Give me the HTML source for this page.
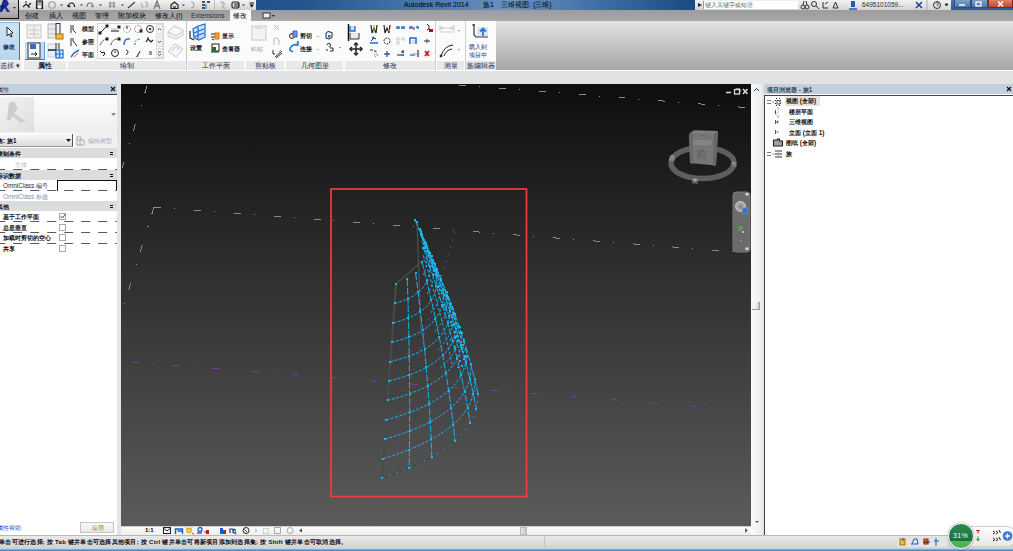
<!DOCTYPE html>
<html><head><meta charset="utf-8">
<style>
*{margin:0;padding:0;box-sizing:border-box}
html,body{width:1013px;height:551px;overflow:hidden;background:#dfe0e2;font-family:"Liberation Sans",sans-serif;font-size:7px;color:#000}
.a{position:absolute}
.t{position:absolute;white-space:nowrap;line-height:9px;font-size:6.4px}
#title{left:0;top:0;width:1013px;height:10px;background:linear-gradient(90deg,#1c4a84 0%,#24548f 30%,#5580b3 45%,#6a92c0 50%,#3c6aa1 60%,#1d4b85 68%,#1c4a84 100%)}
#qat{left:0;top:0;width:256px;height:10px;background:linear-gradient(#f4f4f4,#d2d2d2)}
#tabs{left:0;top:10px;width:1013px;height:11px;background:linear-gradient(#9c9c9c,#a8a8a8)}
#ribbon{left:0;top:21px;width:1013px;height:49px;background:#fbfbfb}
#rfill{left:496px;top:21px;width:517px;height:49px;background:linear-gradient(#e2e2e2,#a6a6a6)}
#opt{left:0;top:70px;width:1013px;height:14px;background:#e1e2e4;border-top:1px solid #fff}
#vp{left:121px;top:84px;width:630px;height:442px;background:linear-gradient(#0e0e0e,#5b5b5b)}
#props{left:0;top:84px;width:117px;height:451px;background:#fff}
#pb{left:763px;top:84px;width:250px;height:451px;background:#fff}
#status{left:0;top:535px;width:1013px;height:14px;background:linear-gradient(#ececec,#d0d0d0)}
#task{left:0;top:549px;width:1013px;height:2px;background:linear-gradient(#8ab8e0,#3a80c0)}
.lbl{position:absolute;top:61px;height:9px;background:#e9e9e9;color:#1a2a4a;text-align:center;line-height:9px;font-size:7px}
.tab{position:absolute;top:11px;line-height:9px;font-size:7px;color:#000820}
.ic{position:absolute}
</style></head><body>
<div id="title" class="a"></div>
<div id="qat" class="a"></div>
<div class="t" style="left:404px;top:0;font-size:7px;color:#000">Autodesk Revit 2014</div>
<div class="t" style="left:483px;top:0;font-size:7px;color:#000">族1</div>
<div class="t" style="left:501px;top:0;font-size:7px;color:#000">三维视图: {三维}</div>
<!-- QAT icons -->
<svg class="a" style="left:0;top:0" width="256" height="10">
<g stroke="#333" fill="none" stroke-width="1.2">
<path d="M23,7 l3,-3 l2,2 l3,-3 M25,2 h2 M29,6 v2" stroke="#222"/>
<rect x="36.5" y="1" width="6" height="7.5" fill="#9aa4b0" stroke="#222"/><rect x="38" y="5.5" width="3" height="3" fill="#fff" stroke="none"/>
<circle cx="52" cy="5" r="3.3" stroke="#aaa" stroke-width="1.5"/>
<path d="M68.5,7 q0,-4 3,-4 q3,0 3,4 M68.5,7 l-1,-2 M68.5,7 l2,-1" stroke="#222"/>
<path d="M87,7 q0,-4 3,-4 q3,0 3,4 M93,7 l-2,-1" stroke="#777"/>
<path d="M109,3 h6 M109,6 h6 M110,2 v6 M114,2 v6" stroke="#888"/>
<path d="M128,8 l7,-6" stroke="#444"/>
<path d="M141,3 l2,5 M145,2 a2.5,2.5 0 1 1 0,5" stroke="#aaa"/>
<path d="M154,9 l3,-8 l3,8 M155.5,6 h3" stroke="#777" stroke-width="1.3"/>
<path d="M171,5 l3.5,-3 l3.5,3 v3.5 h-7z" stroke="#222"/><path d="M173,7 h3" stroke="#222"/>
<path d="M191,2 a3,3 0 1 1 0,6" stroke="#aaa"/>
<path d="M202,2 h3 M202,5 h3 M202,8 h3 M207,2 h3" stroke="#222" stroke-width="1.5"/><path d="M206,4 v5" stroke="#2a90e0"/>
<path d="M214.5,0 v10" stroke="#bbb" stroke-width="1"/>
<path d="M220,2 h3 v6 h3 M224,4 h2" stroke="#aaa"/>
<rect x="232" y="2" width="7" height="6" rx="1.5" stroke="#222"/><path d="M234,4 h5 M234,6 h5" stroke="#222"/>
</g>
<g fill="#333"><path d="M60,4.5 h3 l-1.5,1.5z M80,4.5 h3 l-1.5,1.5z M99,4.5 h3 l-1.5,1.5z M121,4.5 h3 l-1.5,1.5z M182,4.5 h3 l-1.5,1.5z M242,4.5 h3 l-1.5,1.5z"/>
<path d="M249.5,2.5 h4.5 v1 h-4.5z M249.5,4.5 h4.5 l-2.25,3z" fill="#111"/></g>
</svg>
<!-- info center -->
<div class="a" style="left:695px;top:0;width:256px;height:10px;background:linear-gradient(#f2f2f2,#d4d4d4)"></div>
<div class="a" style="left:703px;top:1px;width:95px;height:8px;background:#fff;border-left:1px solid #999"></div>
<svg class="a" style="left:696px;top:0" width="8" height="10"><path d="M2,3 l4,2 l-4,2z" fill="#222"/></svg>
<div class="t" style="left:705px;top:0;font-size:6px;color:#666;line-height:10px">键入关键字或短语</div>
<svg class="a" style="left:798px;top:0" width="155" height="10">
<g stroke="#333" fill="none" stroke-width="1">
<circle cx="5" cy="7" r="2"/><circle cx="9" cy="7" r="2"/><path d="M5,5 l1,-4 M9,5 l-1,-4"/>
<circle cx="16" cy="4" r="2.5"/><path d="M18,6 l3,3"/>
<path d="M25,2 v6 h5 M27,4 l3,-2"/>
<path d="M35,8 l2.5,-6 l2.5,6z"/>
<rect x="53" y="1" width="4" height="6" fill="#2a55b8" stroke="none"/><path d="M51,9 h8" stroke="#2a55b8" stroke-width="1.5"/>
<path d="M118,2 l6,6 M124,2 l-6,6" stroke="#1b3f8a" stroke-width="1.5"/>
<path d="M129,0 v10" stroke="#aaa"/>
<circle cx="139" cy="5" r="3.5"/><path d="M138,3.5 a1.2,1.2 0 1 1 1.5,1.5 v1" stroke="#1b3f8a"/>
<path d="M147,4 l3,0 l-1.5,2z" fill="#333"/>
</g></svg>
<div class="t" style="left:862px;top:0;font-size:6.5px;color:#3a2a08;line-height:10px">6495101059...</div>
<!-- window buttons -->
<div class="a" style="left:951px;top:0;width:62px;height:10px;background:linear-gradient(#4a78ad,#2a5a93)"></div>
<div class="a" style="left:954px;top:0;width:17px;height:8px;background:linear-gradient(#7d9fc8,#4d77aa);border:1px solid #2b4f80;border-top:none"></div>
<div class="a" style="left:971px;top:0;width:17px;height:8px;background:linear-gradient(#7d9fc8,#4d77aa);border:1px solid #2b4f80;border-top:none"></div>
<div class="a" style="left:988px;top:0;width:25px;height:8px;background:linear-gradient(#e0806a,#c4452f);border:1px solid #7a2a1a;border-top:none"></div>
<svg class="a" style="left:951px;top:0" width="62" height="10"><path d="M8,5 h6" stroke="#fff" stroke-width="1.5"/><rect x="25" y="2" width="5" height="4" fill="none" stroke="#fff" stroke-width="1.2"/><path d="M47,1.5 l5,5 M52,1.5 l-5,5" stroke="#fff" stroke-width="1.5"/></svg>
<!-- tabs -->
<div id="tabs" class="a"></div>
<div class="a" style="left:0;top:0;width:18.5px;height:19px;background:linear-gradient(#d4d4d4,#9e9e9e);border-right:1.5px solid #111;border-bottom:1.5px solid #111"></div>
<svg class="a" style="left:0;top:0" width="20" height="20"><path d="M-1,12 L3,0 L7,0 L9,4 L6.5,7 L10,12 L7,12 L4.5,8 L2,12 Z" fill="#1a2a9a"/><path d="M-1,6 L5,5 L3,9z" fill="#0a1a70"/><path d="M13,7 l3,0 l-1.5,1.8z" fill="#222"/></svg>
<div class="tab" style="left:25px">创建</div>
<div class="tab" style="left:49px">插入</div>
<div class="tab" style="left:72px">视图</div>
<div class="tab" style="left:95px">管理</div>
<div class="tab" style="left:118px">附加模块</div>
<div class="tab" style="left:155px">修改人(I)</div>
<div class="tab" style="left:191px;font-weight:normal;font-size:6.5px;letter-spacing:0.2px;color:#1a2a40">Extensions</div>
<div class="a" style="left:230px;top:10px;width:21px;height:11px;background:linear-gradient(#f6f6f6,#fbfbfb)"></div>
<div class="tab" style="left:233px">修改</div>
<svg class="a" style="left:262px;top:11px" width="16" height="9"><rect x="1" y="2" width="7" height="5" fill="#eee" stroke="#333"/><path d="M10,4 l3,0 l-1.5,2z" fill="#222"/></svg>
<!-- ribbon -->
<div id="ribbon" class="a"></div>
<div id="rfill" class="a"></div>
<div class="lbl" style="left:0;width:21px;text-align:left">选择 ▾</div>
<div class="lbl" style="font-weight:bold;left:24px;width:42px">属性</div>
<div class="lbl" style="left:68px;width:118px">绘制</div>
<div class="a" style="left:186px;top:21px;width:1px;height:49px;background:#c8c8c8"></div>
<div class="lbl" style="left:188px;width:56px">工作平面</div>
<div class="lbl" style="left:246px;width:38px">剪贴板</div>
<div class="lbl" style="left:286px;width:57px">几何图形</div>
<div class="lbl" style="left:345px;width:90px">修改</div>
<div class="a" style="left:435px;top:21px;width:1px;height:49px;background:#d0d0d0"></div>
<div class="lbl" style="left:437px;width:27px">测量</div>
<div class="a" style="left:465px;top:21px;width:1px;height:49px;background:#d0d0d0"></div>
<div class="lbl" style="left:466px;width:30px;background:#dfe5ee">族编辑器</div>
<div class="a" style="left:0;top:22px;width:20px;height:38px;background:linear-gradient(#cfe3f6,#b9d5f0);border-right:1.5px solid #2a78d0;border-top:1px solid #8ab8e8"></div>
<div class="a" style="left:25px;top:42px;width:20px;height:18px;background:#c4dcf3;border-bottom:1.5px solid #2a78d0;border-right:1px solid #5a9ae0"></div>
<div class="t" style="left:3px;top:42px;color:#1a3060;font-weight:bold">修改</div>
<div class="t" style="left:82px;top:24px;color:#101828;font-weight:bold">模型</div>
<div class="t" style="left:82px;top:37px;color:#101828;font-weight:bold">参照</div>
<div class="t" style="left:82px;top:50px;color:#101828;font-weight:bold">平面</div>
<div class="t" style="left:190px;top:43px;color:#101828;font-weight:bold">设置</div>
<div class="t" style="left:222px;top:31px;color:#2a2020;font-weight:bold">显示</div>
<div class="t" style="left:222px;top:44px;color:#101828;font-weight:bold">查看器</div>
<div class="t" style="left:251px;top:44px;color:#b0a0a0">粘贴</div>
<div class="t" style="left:300px;top:31px;color:#101020;font-weight:bold">剪切</div>
<div class="t" style="left:300px;top:44px;color:#101020;font-weight:bold">连接</div>
<div class="t" style="left:469px;top:42px;color:#1a3a7a">载入到</div>
<div class="t" style="left:469px;top:50px;color:#1a3a7a">项目中</div>
<svg class="a" style="left:0;top:21px" width="496" height="40" viewBox="0 21 496 40">
<g fill="none" stroke="#222" stroke-width="1">
<!-- cursor -->
<path d="M7,27 L7,36 L9,34 L11,37 L12,36.5 L10.5,33.5 L13,33 Z" fill="#fff" stroke="#222"/>
<!-- props icons -->
<g stroke="#c8c8c8"><rect x="27" y="25" width="14" height="13" fill="#f0f0f0"/><path d="M29,30 h10 M29,34 h10 M34,26 v11"/></g>
<rect x="48" y="24" width="10" height="14" fill="#e8ecf0" stroke="#bbb"/><path d="M48,24 h8 M48,29 h8 M48,34 h8" stroke="#c0c6cc"/><rect x="56" y="23.5" width="4" height="12" stroke="#333" fill="#f4f4f4"/><rect x="56" y="34" width="7" height="5" fill="#f0c030" stroke="#a07010"/>
<rect x="28" y="43" width="12" height="15" fill="#fbfbfb" stroke="#333"/><rect x="30" y="44" width="6" height="5" fill="#3a6ab0" stroke="none"/><path d="M31,54 h6 M35,52 l2,2 l-2,2" stroke="#222"/>
<rect x="48" y="44" width="10" height="13" fill="#eceff2" stroke="#ccc"/><path d="M48,50 h8" stroke="#222" stroke-width="1.5"/><path d="M56,43 v13 M59,43 v6" stroke="#333"/><g stroke="#1a70d0" stroke-width="1.2"><rect x="56" y="50" width="7" height="8" fill="#d8e8f8"/><path d="M59.5,50 v8 M56,54 h7"/></g>
<!-- draw small -->
<path d="M71,25 v8 M73,25 v5 l3,3" stroke="#333"/>
<path d="M71,38 v8 M73,38 v3 l4,5" stroke="#333"/>
<path d="M71,57 l3,-4 l5,-3" stroke="#2a6ad0" stroke-width="1.5"/><path d="M74,57 l4,-4" stroke="#e07020"/>
<rect x="97.5" y="23.5" width="66" height="35" fill="none" stroke="#d4d4d4"/>
<rect x="156.5" y="24.5" width="6" height="10" fill="#f2f2f2" stroke="#ddd"/><rect x="156.5" y="36.5" width="6" height="10" fill="#f2f2f2" stroke="#ddd"/><rect x="156.5" y="48.5" width="6" height="9" fill="#f2f2f2" stroke="#ddd"/>
<path d="M158,30 l1.5,-1.5 l1.5,1.5 M158,41 l1.5,1.5 l1.5,-1.5 M158,52 h3 M158,54 l1.5,1.5 l1.5,-1.5" stroke="#555"/>
<path d="M100,33 l7,-7" /><rect x="106" y="25" width="2" height="2" fill="#111"/><rect x="99" y="32" width="2" height="2" fill="#111"/>
<path d="M111,31 h8" stroke="#111"/><path d="M111,29 h6" stroke="#bbb"/><rect x="118" y="26" width="2" height="2" fill="#111"/>
<circle cx="127" cy="29" r="3.5" stroke="#999" stroke-dasharray="1.5,1"/><path d="M127,26 v3"/>
<circle cx="138" cy="29" r="3.5" stroke="#777" stroke-dasharray="1.5,1"/><rect x="140" y="30" width="2" height="2" fill="#e02020"/>
<circle cx="150" cy="29" r="3.5" stroke="#333"/><circle cx="150" cy="29" r="0.8" fill="#333"/>
<path d="M100,45 q3,-6 7,-6" stroke-dasharray="1.5,1"/><rect x="106" y="38" width="2" height="2" fill="#111"/>
<path d="M111,45 q1,-6 7,-6" stroke-dasharray="1.5,1"/><rect x="118" y="38" width="2" height="2" fill="#111"/>
<path d="M124,45 q0,-7 6,-6" stroke="#1a60d0" stroke-width="1.3"/>
<path d="M135,45 v-3 q1,-3 6,-3" stroke="#1a60d0" stroke-dasharray="2,1.5"/>
<path d="M146,42 l2,-3 l3,3 l2,-2 M148,39 v-2" stroke="#222" stroke-width="1.2"/>
<path d="M100,51 l2,2 l2,-1 q2,2 -1,4" stroke="#111"/>
<circle cx="115" cy="53" r="3.5"/><path d="M115,51 v2"/>
<path d="M126,50 q4,1 0,5" />
<path d="M137,57 l3,-6" stroke="#111"/><path d="M136,57 l4,-6" stroke="#2aaa30" stroke-dasharray="1,1"/>
<rect x="149" y="51" width="3" height="4" fill="#999" stroke="none"/>
<g stroke="#c8c8c8" fill="#f6f6f6"><path d="M168,32 l6,-6 l9,4 l0,5 l-7,4 l-8,-3z"/><path d="M168,32 l8,4 l7,-5"/><path d="M168,51 l7,-7 l8,5 l-7,8z"/><path d="M171,51 l5,-4 l4,3"/></g>
<!-- workplane -->
<g stroke="#1a6ed0" stroke-width="1.2" fill="#c8dff4"><path d="M193,29 l5,-3 l7,-2 v13 l-6,3 l-5,-2z"/><path d="M198,27 v12 M194,33 l10,-4 M194,37 l10,-4"/></g><path d="M190,31 v7 l4,2" stroke="#222" stroke-width="1.2"/>
<path d="M211,34 h4 M211,37 h4 M212,39 l2,1" stroke="#222"/><rect x="215" y="33" width="4" height="6" fill="#f6a020" stroke="#e07010"/>
<rect x="212" y="44" width="7" height="7" fill="#fff" stroke="#222"/><rect x="212" y="47" width="4" height="4" fill="#1a7a20" stroke="none"/><path d="M211,52 h8" stroke="#222"/>
<!-- clipboard -->
<g stroke="#c8c8c8"><rect x="252" y="26" width="14" height="14" fill="#f4f4f4"/><path d="M255,28 h8"/></g>
<path d="M274,25 l5,5 M279,25 l-5,5" stroke="#bbb"/>
<path d="M274,45 v-7 h3 l2,2 v5" stroke="#bbb"/>
<path d="M273,50 v4 h2 M275,57 l7,-6 M276,58 l6,-5" stroke="#333"/><path d="M279,52 l2,-2" stroke="#e0a030"/>
<!-- geometry -->
<circle cx="292" cy="36" r="2.5" stroke="#222"/><path d="M293,31 v6 h4 v-6z" fill="#5aa0e0" stroke="#1a6ed0"/><path d="M292,33 l0.5,2" stroke="#e02020" stroke-width="1.5"/>
<path d="M290,48 l3,-3 h5 v-4 M290,48 v2 l3,2" stroke="#1a6ed0" stroke-width="1.5" fill="#a8ccee"/>
<path d="M326,33 l2,-1.5 l4,1 v5 l-3,1.5 l-3,-1z" stroke="#222"/><rect x="328" y="35" width="2.5" height="2.5" fill="#1a6ed0" stroke="none"/>
<path d="M327,45 a1.8,1.8 0 1 1 2,2 M326,50 h2 M330,48 h3 v3 h-3" stroke="#222"/><path d="M339,47 l2,0 l-1,1.5z" fill="#555" stroke="none"/>
<path d="M318,36 v0.5 M318,49 v0.5" stroke="#333" stroke-width="1.3"/>
<!-- modify -->
<path d="M348.5,24 v17" stroke="#111" stroke-width="1.5"/><path d="M350,26 v5 h5 v-5" stroke="#1a6ed0" stroke-width="1.3" fill="#c8dff4"/><path d="M350,33 v6 h9 v-6" stroke="#333" fill="#e8ecf0"/>
<path d="M356,43 v12 M350,49 h12" stroke="#222" stroke-width="1.5"/><path d="M354,45 l2,-2 l2,2 M354,53 l2,2 l2,-2 M352,47 l-2,2 l2,2 M360,47 l2,2 l-2,2" stroke="#222" stroke-width="1.5"/>
<path d="M371,25 l1,8 l2,-5 l2,5 l1,-8" stroke="#222" stroke-width="1.2"/><path d="M374,25 v8" stroke="#7ac040"/>
<path d="M384,25 l1,8 l2,-5 l2,5 l1,-8" stroke="#222" stroke-width="1.2"/><path d="M388,31 l2,-1" stroke="#f08020" stroke-width="1.5"/>
<path d="M397,29 v-2 h2 v2 M402,29 v-2 h2 v2" stroke="#1a6ed0" stroke-width="1.5"/>
<path d="M410,29 v-2 h2 v2 M416,27 h2 v2" stroke="#1a6ed0" stroke-width="1.5"/><path d="M414,27 v3" stroke="#d02020" stroke-width="1.2"/>
<path d="M427,24 l2,2 v3 l-2,1" stroke="#222"/><rect x="429" y="29" width="4" height="3" fill="#b01010" stroke="none"/>
<path d="M370,43 h8" stroke="#1a6ed0" stroke-width="1.5"/><path d="M371,41 l3,-3 l2,1" stroke="#222"/><path d="M372,38 l2,-1" stroke="#1a6ed0" stroke-width="1.5"/>
<circle cx="387" cy="41" r="3" stroke-dasharray="2,1"/>
<g stroke="#ccc"><rect x="397" y="38" width="2" height="2"/><rect x="402" y="38" width="2" height="2"/><rect x="397" y="42" width="2" height="2"/></g>
<path d="M410,44 v-6 h6 v6" stroke="#1a6ed0" stroke-width="1.5"/><rect x="412" y="40" width="3" height="4" fill="#ddd" stroke="none"/>
<path d="M424,41 h6 M427,39 v4" stroke="#333"/>
<path d="M370,50 l3,0 M374,51 h2 v1" stroke="#333"/><circle cx="376" cy="55" r="1.5" stroke="#1a6ed0" stroke-dasharray="1,1"/>
<path d="M384,54 h6 M387,51 v6" stroke="#222"/><rect x="386" y="53" width="3" height="2" fill="#1a6ed0" stroke="none"/>
<path d="M397,55 h4 M401,52 h3 M403,50 v3" stroke="#222"/><rect x="401" y="54" width="3" height="2" fill="#1a8ae0" stroke="none"/>
<path d="M410,55 h5 M418,50 v7" stroke="#333" stroke-width="1.2"/><path d="M412,54 h5" stroke="#5ab0f0"/>
<path d="M425,51 l4,5 M429,51 l-4,5" stroke="#d01818" stroke-width="1.8"/>
<!-- measure -->
<path d="M440,28 h14 M441,28 l2,-1.5 M441,28 l2,1.5 M453,28 l-2,-1.5 M453,28 l-2,1.5 M440,25 v6 M454,25 v6" stroke="#c8c8c8"/><rect x="440" y="31" width="14" height="2" fill="#e4e4e4" stroke="none"/>
<path d="M458,30 l2,0 l-1,1.5z M458,49 l2,0 l-1,1.5z" fill="#777" stroke="none"/>
<path d="M441,56 q3,-10 12,-11 M444,56 q2,-6 8,-7" stroke="#222"/><circle cx="441" cy="56" r="1" fill="#111"/>
<!-- family editor -->
<path d="M474,24 v11 l2,2 h12" stroke="#333" stroke-width="1.2"/><path d="M472,25 h3" stroke="#333"/><rect x="477" y="27" width="11" height="9" fill="#dde4ec" stroke="none"/><path d="M483,36 v-7 M480,31.5 l3,-3 l3,3" stroke="#1a7ae0" stroke-width="1.8"/>
</g>
</svg>
<!--RIBBONICONS-->
<div id="opt" class="a"></div>
<!-- properties palette -->
<div id="props" class="a"></div>
<div class="a" style="left:0;top:84px;width:117px;height:11px;background:#c4d0dd;border-bottom:1px solid #3a3a3a"></div>
<div class="t" style="left:-3px;top:85px;color:#4a4030">属性</div>
<svg class="a" style="left:109px;top:85px" width="8" height="9"><path d="M2,2 l4,4 M6,2 l-4,4" stroke="#111" stroke-width="1.2"/></svg>
<div class="a" style="left:0;top:96px;width:117px;height:37px;background:linear-gradient(#fdfdfd,#eeeeee)"></div>
<div class="a" style="left:0;top:97px;width:34px;height:35px;background:linear-gradient(135deg,#f4f4f4,#dedede)"></div>
<svg class="a" style="left:0;top:97px" width="34" height="35"><path d="M7,23 L9,6 L14,4 L18,12 L14,16 L25,24 L21,26 L12,19 L11,23 Z" fill="#cdcdcd"/></svg>
<svg class="a" style="left:111px;top:112px" width="6" height="6"><path d="M0,1 h5 l-2.5,3z" fill="#888"/></svg>
<div class="a" style="left:0;top:134px;width:73px;height:13px;background:linear-gradient(#fafafa,#dcdcdc);border-right:1.5px solid #555;border-bottom:1px solid #999"></div>
<div class="t" style="font-weight:bold;left:-3px;top:136px;color:#111">族: 族1</div>
<svg class="a" style="left:65px;top:137px" width="7" height="7"><path d="M1,2 h5 l-2.5,3z" fill="#111"/></svg>
<div class="a" style="left:75px;top:133px;width:42px;height:15px;background:#f0f0f0"></div>
<svg class="a" style="left:76px;top:135px" width="12" height="11"><path d="M1,2 h4 v3 h-4z M4,5 h4 v5 h-4z M1,5 v5 h3" fill="none" stroke="#aaa"/></svg>
<div class="t" style="left:88px;top:136px;color:#a0a8b8">编辑类型</div>
<div class="a" style="left:0;top:148px;width:117px;height:10px;background:#dcdcdc"></div>
<div class="t" style="font-weight:bold;left:-3px;top:149px;color:#111">限制条件</div>
<div class="t" style="left:15px;top:160px;color:#c8b8a8">主体</div>
<div class="a" style="left:0;top:170px;width:117px;height:10px;background:#dcdcdc"></div>
<div class="t" style="font-weight:bold;left:-3px;top:171px;color:#111">标识数据</div>
<div class="t" style="left:3px;top:181px;color:#1a2a4a">OmniClass 编号</div>
<div class="a" style="left:57px;top:180px;width:60px;height:11px;border:1px solid #111;border-bottom:none;background:#fff"></div>
<div class="t" style="left:3px;top:192px;color:#8090b0">OmniClass 标题</div>
<div class="a" style="left:0;top:201px;width:117px;height:10px;background:#dcdcdc"></div>
<div class="t" style="font-weight:bold;left:-3px;top:202px;color:#111">其他</div>
<div class="t" style="font-weight:bold;left:3px;top:212px;color:#111">基于工作平面</div>
<div class="t" style="font-weight:bold;left:3px;top:223px;color:#111">总是垂直</div>
<div class="t" style="font-weight:bold;left:3px;top:233px;color:#111">加载时剪切的空心</div>
<div class="t" style="font-weight:bold;left:3px;top:244px;color:#111">共享</div>
<svg class="a" style="left:0;top:140px" width="117" height="120">
<g fill="#111"><path d="M110,12 h3 v1 h-3z M110,14 h3 v1 h-3z M110,34 h3 v1 h-3z M110,36 h3 v1 h-3z M110,65 h3 v1 h-3z M110,67 h3 v1 h-3z"/></g>
<g stroke="#5a5a5a" stroke-width="1" stroke-dasharray="9,8" stroke-dashoffset="3.8"><path d="M0,29.5 h117 M0,50.5 h117 M0,81.5 h117 M0,92.5 h117 M0,103.5 h117"/></g>
<g fill="#fff" stroke="#aaa"><rect x="59.5" y="73.5" width="6" height="6"/><rect x="59.5" y="84.5" width="6" height="6"/><rect x="59.5" y="94.5" width="6" height="6"/><rect x="59.5" y="105.5" width="6" height="6"/></g>
<path d="M60.5,76 l2,2 l3,-4" stroke="#2a4a9a" fill="none"/>
</svg>
<div class="t" style="left:-3px;top:523px;color:#1a5ad0">属性帮助</div>
<div class="a" style="left:80px;top:522px;width:34px;height:11px;background:linear-gradient(#fafafa,#e8e8e8);border:1px solid #c4c4c4"></div>
<div class="t" style="left:92px;top:523px;color:#8a7a60">应用</div>
<div class="a" style="left:117px;top:84px;width:4px;height:451px;background:#e4e4e4"></div>

<div id="vp" class="a"></div>
<svg class="a" style="left:121px;top:84px" width="630" height="442" viewBox="121 84 630 442">
<g stroke="#8a8a8a" stroke-width="1" fill="none" stroke-dasharray="7,13,1,19" shape-rendering="crispEdges">
<path d="M147,86 L122,168"/>
<path d="M154,207 L124,305"/>
<path d="M154,207 L751,253"/>
<path d="M459,85 L752,108"/>
</g>
<path d="M132,362 L711,407.5" stroke="#7a3a98" stroke-width="1" fill="none" stroke-dasharray="7,13,1,19" shape-rendering="crispEdges"/>
<path d="M455,232 L367,526" stroke="#7a3a9a" stroke-width="1.2" fill="none" stroke-dasharray="1.5,6"/>
<rect x="331" y="189" width="195.5" height="307.5" fill="none" stroke="#f23c3c" stroke-width="1.7"/>
<!-- viewcube -->
<ellipse cx="702.5" cy="163" rx="31.5" ry="15.5" fill="none" stroke="#5e5e5e" stroke-width="5.5"/>
<path d="M689,134 L694,130.5 L718,131 L716,165.5 L690,163 Z" fill="#767676"/><path d="M689,134 L693,132 L693,164 L690,163z" fill="#6a6a6a"/>
<path d="M690,133 L694,130.5 L718,131 L714,134 Z" fill="#7e7e7e"/>
<path d="M714,134 L718,131 L716,165.5 L713,166 Z" fill="#666"/>
<rect x="693" y="140" width="19" height="5" fill="#848484"/>
<text x="696" y="158" font-size="11" fill="#5c5c5c" font-family="Liberation Sans">前</text>
<path d="M702,136 l1,-2 M706,136 h1" stroke="#555"/>
<text x="669" y="160" font-size="6" fill="#bbb" font-family="Liberation Sans">西</text>
<text x="731" y="166" font-size="6" fill="#bbb" font-family="Liberation Sans">东</text>
<text x="692" y="183" font-size="6" fill="#ccc" font-family="Liberation Sans">南</text>
<!-- viewport buttons -->
<path d="M726,92.5 h5" stroke="#ddd" stroke-width="1.5"/>
<rect x="734.5" y="89.5" width="5" height="4.5" fill="none" stroke="#ddd" stroke-width="1.3"/><path d="M736,89 h4 v3" stroke="#ddd" fill="none"/>
<path d="M743,89 l4.5,5 M747.5,89 l-4.5,5" stroke="#ddd" stroke-width="1.5"/>
<!-- navbar -->
<rect x="733" y="192" width="17" height="60" rx="3" fill="#6b6b6b" stroke="#7a7a7a"/>
<rect x="745.5" y="193" width="3" height="2.5" fill="#ddd"/><rect x="745.5" y="247.5" width="3" height="2.5" fill="#ddd"/>
<circle cx="740.5" cy="206.5" r="5" fill="#a8a8a8" stroke="#c8c8c8"/><circle cx="740.5" cy="206.5" r="2" fill="#888"/>
<rect x="742.5" y="208" width="5" height="6" fill="#3a70b8" stroke="#5a90d0" stroke-width="0.8"/>
<rect x="738" y="226" width="5" height="5.5" fill="#5a9a4a"/><circle cx="743" cy="232" r="1.5" fill="#ddd" stroke="#333" stroke-width="0.6"/>
<path d="M739.5,240 h3 l-1.5,1.5z" fill="#999"/>
<path d="M741.5,218.5 h0.8" stroke="#999"/>
<path d="M396.0,284.0 L395.3,293.7 L394.6,303.4 L393.9,313.1 L393.2,322.8 L392.5,332.5 L391.8,342.2 L391.1,351.9 L390.4,361.6 L389.7,371.3 L389.0,381.0 L388.3,390.7 L387.6,400.4 L386.9,410.1 L386.2,419.8 L385.5,429.5 L384.8,439.2 L384.1,448.9 L383.4,458.6 L382.7,468.3 L382.0,478.0" stroke="#4a4a4a" stroke-width="2" fill="none"/>
<path d="M382.0,478.0 L388.4,475.8 L394.6,473.6 L400.6,471.4 L406.4,469.1 L411.9,466.8 L417.2,464.4 L422.3,462.0 L427.2,459.5 L431.8,457.0 L436.2,454.4 L440.4,451.8 L444.4,449.2 L448.2,446.5 L451.7,443.8 L455.0,441.0 L458.1,438.2 L461.0,435.3 L463.6,432.4 L466.0,429.4 L468.2,426.4 L470.2,423.4 L472.0,420.3 L473.5,417.2 L474.8,414.0 L475.9,410.8 L476.8,407.5 L477.4,404.2 L477.8,400.8 L478.0,397.4 L478.0,394.0" stroke="#4a4a4a" stroke-width="2" fill="none"/>
<path d="M396,284 L428,256 M417,221 L421,335" stroke="#4a4a4a" stroke-width="1.5" fill="none"/>
<path d="M394.6,303.4 L397.0,302.7 L399.4,302.0 L401.6,301.3 L403.8,300.5 L405.9,299.7 L407.9,298.8 L409.8,297.8 L411.7,296.9 L413.4,295.8 L415.1,294.7 L416.6,293.6 L418.1,292.4 L419.5,291.2 L420.8,290.0 L422.0,288.6 L423.2,287.3 L424.2,285.9 L425.2,284.4 L426.0,282.9 L426.8,281.3 L427.5,279.7 L428.1,278.1 L428.7,276.4 L429.1,274.6 L429.5,272.9 L429.7,271.0 L429.9,269.1 L430.0,267.2 L430.0,265.2 L429.9,263.2 L429.8,261.1 L429.5,259.0 L429.2,256.8 L428.7,254.6 L428.2,252.3 L427.6,250.0 L426.9,247.7 L426.2,245.2 L425.3,242.8 L424.4,240.3" stroke="#1ab4f0" stroke-width="1" fill="none" stroke-dasharray="3,1.5"/>
<path d="M393.2,322.8 L396.0,322.1 L398.7,321.4 L401.2,320.6 L403.7,319.8 L406.1,318.9 L408.5,318.0 L410.7,317.0 L412.8,316.0 L414.9,314.9 L416.8,313.8 L418.7,312.7 L420.4,311.5 L422.1,310.3 L423.7,309.0 L425.2,307.7 L426.6,306.3 L427.9,304.9 L429.1,303.4 L430.3,301.9 L431.3,300.4 L432.3,298.8 L433.1,297.1 L433.9,295.4 L434.6,293.7 L435.2,291.9 L435.7,290.1 L436.1,288.3 L436.4,286.3 L436.6,284.4 L436.7,282.4 L436.8,280.3 L436.7,278.3 L436.6,276.1 L436.3,273.9 L436.0,271.7 L435.6,269.4 L435.1,267.1 L434.5,264.8 L433.8,262.4 L433.0,259.9" stroke="#1ab4f0" stroke-width="1" fill="none" stroke-dasharray="3,1.5"/>
<path d="M391.8,342.2 L394.9,341.4 L397.9,340.7 L400.8,339.8 L403.6,338.9 L406.3,338.0 L408.9,337.0 L411.4,336.0 L413.8,335.0 L416.2,333.9 L418.4,332.8 L420.5,331.6 L422.6,330.4 L424.5,329.1 L426.4,327.8 L428.1,326.4 L429.8,325.0 L431.3,323.6 L432.8,322.1 L434.2,320.6 L435.5,319.1 L436.7,317.5 L437.7,315.8 L438.7,314.1 L439.6,312.4 L440.4,310.6 L441.1,308.8 L441.8,306.9 L442.3,305.0 L442.7,303.1 L443.0,301.1 L443.2,299.1 L443.4,297.0 L443.4,294.9 L443.4,292.7 L443.2,290.5 L443.0,288.3 L442.6,286.0 L442.2,283.7 L441.7,281.3 L441.0,278.9" stroke="#1ab4f0" stroke-width="1" fill="none" stroke-dasharray="3,1.5"/>
<path d="M390.4,361.6 L393.8,360.8 L397.1,359.9 L400.3,359.0 L403.4,358.0 L406.4,357.1 L409.2,356.0 L412.0,355.0 L414.7,353.9 L417.3,352.7 L419.8,351.5 L422.2,350.3 L424.5,349.0 L426.7,347.7 L428.8,346.4 L430.8,345.0 L432.7,343.6 L434.5,342.1 L436.2,340.6 L437.8,339.0 L439.3,337.4 L440.7,335.8 L442.0,334.1 L443.2,332.4 L444.3,330.7 L445.3,328.9 L446.2,327.1 L447.0,325.2 L447.7,323.3 L448.3,321.3 L448.8,319.4 L449.2,317.3 L449.5,315.3 L449.7,313.2 L449.8,311.0 L449.8,308.8 L449.7,306.6 L449.5,304.3 L449.2,302.0 L448.9,299.7 L448.4,297.3" stroke="#1ab4f0" stroke-width="1" fill="none" stroke-dasharray="3,1.5"/>
<path d="M389.0,381.0 L392.7,380.1 L396.2,379.1 L399.7,378.1 L403.1,377.1 L406.3,376.0 L409.5,374.9 L412.5,373.8 L415.5,372.6 L418.3,371.4 L421.1,370.1 L423.7,368.8 L426.2,367.5 L428.7,366.1 L431.0,364.7 L433.2,363.3 L435.3,361.8 L437.3,360.3 L439.2,358.7 L441.0,357.1 L442.8,355.5 L444.3,353.8 L445.8,352.1 L447.2,350.4 L448.5,348.6 L449.7,346.8 L450.8,344.9 L451.8,343.0 L452.6,341.1 L453.4,339.1 L454.1,337.1 L454.6,335.1 L455.1,333.0 L455.4,330.9 L455.7,328.7 L455.8,326.5 L455.9,324.3 L455.8,322.0 L455.6,319.7 L455.4,317.4 L455.0,315.0" stroke="#1ab4f0" stroke-width="1" fill="none" stroke-dasharray="3,1.5"/>
<path d="M387.6,400.4 L391.5,399.4 L395.4,398.3 L399.1,397.2 L402.7,396.1 L406.2,394.9 L409.6,393.7 L412.9,392.5 L416.1,391.2 L419.2,389.9 L422.1,388.6 L425.0,387.2 L427.8,385.8 L430.4,384.3 L432.9,382.9 L435.4,381.3 L437.7,379.8 L439.9,378.2 L442.0,376.6 L444.0,374.9 L445.9,373.2 L447.7,371.5 L449.3,369.8 L450.9,368.0 L452.4,366.1 L453.7,364.3 L454.9,362.4 L456.1,360.4 L457.1,358.5 L458.0,356.5 L458.8,354.4 L459.5,352.3 L460.1,350.2 L460.6,348.1 L461.0,345.9 L461.2,343.7 L461.4,341.4 L461.5,339.1 L461.4,336.8 L461.2,334.5 L461.0,332.1" stroke="#1ab4f0" stroke-width="1" fill="none" stroke-dasharray="3,1.5"/>
<path d="M386.2,419.8 L390.4,418.7 L394.5,417.5 L398.4,416.3 L402.3,415.0 L406.0,413.7 L409.7,412.4 L413.2,411.1 L416.6,409.7 L419.9,408.3 L423.0,406.9 L426.1,405.4 L429.1,403.9 L431.9,402.3 L434.6,400.8 L437.3,399.2 L439.8,397.5 L442.2,395.9 L444.4,394.2 L446.6,392.4 L448.7,390.7 L450.6,388.9 L452.4,387.0 L454.2,385.2 L455.8,383.3 L457.3,381.3 L458.7,379.4 L459.9,377.4 L461.1,375.4 L462.1,373.3 L463.1,371.2 L463.9,369.1 L464.6,366.9 L465.2,364.7 L465.7,362.5 L466.1,360.3 L466.3,358.0 L466.5,355.7 L466.5,353.3 L466.4,350.9 L466.2,348.5" stroke="#1ab4f0" stroke-width="1" fill="none" stroke-dasharray="3,1.5"/>
<path d="M384.8,439.2 L389.2,437.9 L393.5,436.6 L397.7,435.2 L401.8,433.9 L405.7,432.5 L409.6,431.0 L413.3,429.6 L416.9,428.1 L420.4,426.5 L423.8,425.0 L427.0,423.4 L430.2,421.8 L433.2,420.1 L436.1,418.5 L438.9,416.7 L441.6,415.0 L444.1,413.2 L446.6,411.4 L448.9,409.6 L451.1,407.8 L453.2,405.9 L455.2,404.0 L457.0,402.0 L458.8,400.0 L460.4,398.0 L461.9,396.0 L463.3,393.9 L464.6,391.8 L465.8,389.7 L466.8,387.5 L467.7,385.4 L468.5,383.1 L469.2,380.9 L469.8,378.6 L470.3,376.3 L470.6,374.0 L470.9,371.6 L471.0,369.2 L471.0,366.8 L470.8,364.3" stroke="#1ab4f0" stroke-width="1" fill="none" stroke-dasharray="3,1.5"/>
<path d="M383.4,458.6 L388.0,457.2 L392.6,455.7 L397.0,454.2 L401.2,452.7 L405.4,451.1 L409.4,449.5 L413.3,447.9 L417.1,446.3 L420.8,444.6 L424.4,442.9 L427.8,441.2 L431.1,439.5 L434.3,437.7 L437.4,435.9 L440.3,434.1 L443.1,432.2 L445.8,430.4 L448.4,428.4 L450.9,426.5 L453.2,424.5 L455.5,422.5 L457.6,420.5 L459.5,418.5 L461.4,416.4 L463.1,414.3 L464.8,412.2 L466.3,410.0 L467.6,407.8 L468.9,405.6 L470.0,403.4 L471.0,401.1 L471.9,398.8 L472.7,396.5 L473.4,394.2 L473.9,391.8 L474.3,389.4 L474.6,386.9 L474.8,384.5 L474.8,382.0 L474.8,379.5" stroke="#1ab4f0" stroke-width="1" fill="none" stroke-dasharray="3,1.5"/>
<path d="M382.0,478.0 L386.8,476.4 L391.6,474.8 L396.1,473.1 L400.6,471.4 L404.9,469.7 L409.1,468.0 L413.2,466.2 L417.2,464.4 L421.0,462.6 L424.8,460.8 L428.3,458.9 L431.8,457.0 L435.1,455.1 L438.3,453.1 L441.4,451.2 L444.4,449.2 L447.2,447.2 L450.0,445.2 L452.5,443.1 L455.0,441.0 L457.3,438.9 L459.6,436.8 L461.6,434.6 L463.6,432.4 L465.4,430.2 L467.1,427.9 L468.7,425.7 L470.2,423.4 L471.5,421.1 L472.8,418.8 L473.8,416.4 L474.8,414.0 L475.6,411.6 L476.4,409.1 L476.9,406.7 L477.4,404.2 L477.7,401.7 L478.0,399.2 L478.0,396.6 L478.0,394.0" stroke="#1ab4f0" stroke-width="1" fill="none" stroke-dasharray="1.5,6"/>
<path d="M407.3,279.5 L407.4,284.3 L407.6,289.2 L407.8,294.0 L407.9,298.8 L408.1,303.6 L408.2,308.4 L408.3,313.2 L408.5,318.0 L408.6,322.7 L408.7,327.5 L408.8,332.3 L408.9,337.0 L409.0,341.8 L409.1,346.5 L409.2,351.3 L409.2,356.0 L409.3,360.8 L409.4,365.5 L409.4,370.2 L409.5,374.9 L409.5,379.6 L409.6,384.3 L409.6,389.0 L409.6,393.7 L409.6,398.4 L409.7,403.1 L409.7,407.8 L409.7,412.4 L409.6,417.1 L409.6,421.7 L409.6,426.4 L409.6,431.0 L409.6,435.7 L409.5,440.3 L409.5,444.9 L409.4,449.5 L409.4,454.1 L409.3,458.8 L409.2,463.4 L409.1,468.0" stroke="#1ab4f0" stroke-width="1" fill="none" stroke-dasharray="7,1.5"/>
<path d="M415.6,273.2 L416.2,278.0 L416.9,282.8 L417.5,287.7 L418.1,292.4 L418.7,297.2 L419.3,302.0 L419.9,306.8 L420.4,311.5 L421.0,316.2 L421.5,321.0 L422.1,325.7 L422.6,330.4 L423.1,335.0 L423.6,339.7 L424.0,344.4 L424.5,349.0 L425.0,353.7 L425.4,358.3 L425.8,362.9 L426.2,367.5 L426.6,372.1 L427.0,376.7 L427.4,381.2 L427.8,385.8 L428.1,390.3 L428.4,394.9 L428.8,399.4 L429.1,403.9 L429.4,408.4 L429.7,412.9 L429.9,417.3 L430.2,421.8 L430.4,426.2 L430.7,430.7 L430.9,435.1 L431.1,439.5 L431.3,443.9 L431.5,448.3 L431.6,452.6 L431.8,457.0" stroke="#1ab4f0" stroke-width="1" fill="none" stroke-dasharray="7,1.5"/>
<path d="M422.0,262.0 L423.2,266.9 L424.5,271.7 L425.7,276.5 L426.8,281.3 L428.0,286.1 L429.1,290.9 L430.2,295.6 L431.3,300.4 L432.4,305.1 L433.4,309.8 L434.5,314.4 L435.5,319.1 L436.5,323.7 L437.4,328.3 L438.4,332.9 L439.3,337.4 L440.2,342.0 L441.1,346.5 L441.9,351.0 L442.8,355.5 L443.6,360.0 L444.4,364.4 L445.1,368.8 L445.9,373.2 L446.6,377.6 L447.3,382.0 L448.0,386.3 L448.7,390.7 L449.3,395.0 L449.9,399.2 L450.5,403.5 L451.1,407.8 L451.7,412.0 L452.2,416.2 L452.7,420.4 L453.2,424.5 L453.7,428.7 L454.2,432.8 L454.6,436.9 L455.0,441.0" stroke="#1ab4f0" stroke-width="1" fill="none" stroke-dasharray="7,1.5"/>
<path d="M423.2,247.6 L424.9,252.5 L426.6,257.5 L428.3,262.3 L430.0,267.2 L431.6,272.0 L433.3,276.8 L434.8,281.6 L436.4,286.3 L437.9,291.1 L439.4,295.7 L440.8,300.4 L442.3,305.0 L443.7,309.6 L445.0,314.2 L446.4,318.8 L447.7,323.3 L449.0,327.8 L450.2,332.3 L451.4,336.7 L452.6,341.1 L453.8,345.5 L454.9,349.8 L456.0,354.2 L457.1,358.5 L458.1,362.7 L459.2,367.0 L460.1,371.2 L461.1,375.4 L462.0,379.5 L462.9,383.6 L463.8,387.8 L464.6,391.8 L465.4,395.9 L466.2,399.9 L466.9,403.9 L467.6,407.8 L468.3,411.8 L469.0,415.7 L469.6,419.6 L470.2,423.4" stroke="#1ab4f0" stroke-width="1" fill="none" stroke-dasharray="7,1.5"/>
<path d="M420.6,234.7 L422.7,239.7 L424.7,244.7 L426.8,249.7 L428.7,254.6 L430.7,259.5 L432.6,264.3 L434.5,269.2 L436.3,273.9 L438.2,278.7 L439.9,283.4 L441.7,288.1 L443.4,292.7 L445.0,297.4 L446.7,301.9 L448.3,306.5 L449.8,311.0 L451.3,315.5 L452.8,319.9 L454.3,324.3 L455.7,328.7 L457.1,333.1 L458.4,337.4 L459.7,341.7 L461.0,345.9 L462.2,350.1 L463.4,354.3 L464.6,358.4 L465.7,362.5 L466.8,366.6 L467.8,370.6 L468.8,374.6 L469.8,378.6 L470.8,382.5 L471.7,386.5 L472.5,390.3 L473.4,394.2 L474.2,398.0 L474.9,401.7 L475.7,405.5 L476.4,409.1" stroke="#1ab4f0" stroke-width="1" fill="none" stroke-dasharray="7,1.5"/>
<path d="M415.0,220.0 L417.4,225.1 L419.8,230.2 L422.1,235.3 L424.4,240.3 L426.6,245.2 L428.8,250.2 L430.9,255.1 L433.0,259.9 L435.1,264.7 L437.1,269.5 L439.1,274.2 L441.0,278.9 L442.9,283.6 L444.8,288.2 L446.6,292.8 L448.4,297.3 L450.1,301.8 L451.8,306.2 L453.4,310.6 L455.0,315.0 L456.6,319.3 L458.1,323.6 L459.5,327.9 L461.0,332.1 L462.3,336.2 L463.7,340.4 L465.0,344.5 L466.2,348.5 L467.5,352.5 L468.6,356.5 L469.8,360.4 L470.8,364.3 L471.9,368.2 L472.9,372.0 L473.8,375.8 L474.8,379.5 L475.6,383.2 L476.5,386.8 L477.3,390.4 L478.0,394.0" stroke="#1ab4f0" stroke-width="1" fill="none" stroke-dasharray="7,1.5"/>
<rect x="395" y="283" width="2" height="2" fill="#1ab4f0"/>
<rect x="394" y="302" width="2" height="2" fill="#1ab4f0"/>
<rect x="392" y="322" width="2" height="2" fill="#1ab4f0"/>
<rect x="391" y="341" width="2" height="2" fill="#1ab4f0"/>
<rect x="389" y="361" width="2" height="2" fill="#1ab4f0"/>
<rect x="388" y="380" width="2" height="2" fill="#1ab4f0"/>
<rect x="387" y="399" width="2" height="2" fill="#1ab4f0"/>
<rect x="385" y="419" width="2" height="2" fill="#1ab4f0"/>
<rect x="384" y="438" width="2" height="2" fill="#1ab4f0"/>
<rect x="382" y="458" width="2" height="2" fill="#1ab4f0"/>
<rect x="381" y="477" width="2" height="2" fill="#1ab4f0"/>
<rect x="406" y="278" width="2" height="2" fill="#1ab4f0"/>
<rect x="407" y="298" width="2" height="2" fill="#1ab4f0"/>
<rect x="407" y="317" width="2" height="2" fill="#1ab4f0"/>
<rect x="408" y="336" width="2" height="2" fill="#1ab4f0"/>
<rect x="408" y="355" width="2" height="2" fill="#1ab4f0"/>
<rect x="408" y="374" width="2" height="2" fill="#1ab4f0"/>
<rect x="409" y="393" width="2" height="2" fill="#1ab4f0"/>
<rect x="409" y="411" width="2" height="2" fill="#1ab4f0"/>
<rect x="409" y="430" width="2" height="2" fill="#1ab4f0"/>
<rect x="408" y="449" width="2" height="2" fill="#1ab4f0"/>
<rect x="408" y="467" width="2" height="2" fill="#1ab4f0"/>
<rect x="415" y="272" width="2" height="2" fill="#1ab4f0"/>
<rect x="417" y="291" width="2" height="2" fill="#1ab4f0"/>
<rect x="419" y="310" width="2" height="2" fill="#1ab4f0"/>
<rect x="422" y="329" width="2" height="2" fill="#1ab4f0"/>
<rect x="424" y="348" width="2" height="2" fill="#1ab4f0"/>
<rect x="425" y="366" width="2" height="2" fill="#1ab4f0"/>
<rect x="427" y="385" width="2" height="2" fill="#1ab4f0"/>
<rect x="428" y="403" width="2" height="2" fill="#1ab4f0"/>
<rect x="429" y="421" width="2" height="2" fill="#1ab4f0"/>
<rect x="430" y="438" width="2" height="2" fill="#1ab4f0"/>
<rect x="431" y="456" width="2" height="2" fill="#1ab4f0"/>
<rect x="421" y="261" width="2" height="2" fill="#1ab4f0"/>
<rect x="426" y="280" width="2" height="2" fill="#1ab4f0"/>
<rect x="430" y="299" width="2" height="2" fill="#1ab4f0"/>
<rect x="434" y="318" width="2" height="2" fill="#1ab4f0"/>
<rect x="438" y="336" width="2" height="2" fill="#1ab4f0"/>
<rect x="442" y="354" width="2" height="2" fill="#1ab4f0"/>
<rect x="445" y="372" width="2" height="2" fill="#1ab4f0"/>
<rect x="448" y="390" width="2" height="2" fill="#1ab4f0"/>
<rect x="450" y="407" width="2" height="2" fill="#1ab4f0"/>
<rect x="452" y="424" width="2" height="2" fill="#1ab4f0"/>
<rect x="454" y="440" width="2" height="2" fill="#1ab4f0"/>
<rect x="422" y="247" width="2" height="2" fill="#1ab4f0"/>
<rect x="429" y="266" width="2" height="2" fill="#1ab4f0"/>
<rect x="435" y="285" width="2" height="2" fill="#1ab4f0"/>
<rect x="441" y="304" width="2" height="2" fill="#1ab4f0"/>
<rect x="447" y="322" width="2" height="2" fill="#1ab4f0"/>
<rect x="452" y="340" width="2" height="2" fill="#1ab4f0"/>
<rect x="456" y="357" width="2" height="2" fill="#1ab4f0"/>
<rect x="460" y="374" width="2" height="2" fill="#1ab4f0"/>
<rect x="464" y="391" width="2" height="2" fill="#1ab4f0"/>
<rect x="467" y="407" width="2" height="2" fill="#1ab4f0"/>
<rect x="469" y="422" width="2" height="2" fill="#1ab4f0"/>
<rect x="420" y="234" width="2" height="2" fill="#1ab4f0"/>
<rect x="428" y="254" width="2" height="2" fill="#1ab4f0"/>
<rect x="435" y="273" width="2" height="2" fill="#1ab4f0"/>
<rect x="442" y="292" width="2" height="2" fill="#1ab4f0"/>
<rect x="449" y="310" width="2" height="2" fill="#1ab4f0"/>
<rect x="455" y="328" width="2" height="2" fill="#1ab4f0"/>
<rect x="460" y="345" width="2" height="2" fill="#1ab4f0"/>
<rect x="465" y="362" width="2" height="2" fill="#1ab4f0"/>
<rect x="469" y="378" width="2" height="2" fill="#1ab4f0"/>
<rect x="472" y="393" width="2" height="2" fill="#1ab4f0"/>
<rect x="475" y="408" width="2" height="2" fill="#1ab4f0"/>
<rect x="414" y="219" width="2" height="2" fill="#1ab4f0"/>
<rect x="423" y="239" width="2" height="2" fill="#1ab4f0"/>
<rect x="432" y="259" width="2" height="2" fill="#1ab4f0"/>
<rect x="440" y="278" width="2" height="2" fill="#1ab4f0"/>
<rect x="447" y="296" width="2" height="2" fill="#1ab4f0"/>
<rect x="454" y="314" width="2" height="2" fill="#1ab4f0"/>
<rect x="460" y="331" width="2" height="2" fill="#1ab4f0"/>
<rect x="465" y="348" width="2" height="2" fill="#1ab4f0"/>
<rect x="470" y="363" width="2" height="2" fill="#1ab4f0"/>
<rect x="474" y="378" width="2" height="2" fill="#1ab4f0"/>
<rect x="477" y="393" width="2" height="2" fill="#1ab4f0"/>
<path d="M423.2,255.2 L424.4,259.1 L425.6,263.0 L426.8,266.9 L428.0,270.8 L429.1,274.6 L430.2,278.5 L431.3,282.3 L432.4,286.1 L433.5,289.9 L434.6,293.7 L435.6,297.5 L436.6,301.2 L437.7,305.0 L438.7,308.7 L439.6,312.4 L440.6,316.1 L441.5,319.8 L442.5,323.4 L443.4,327.1 L444.3,330.7 L445.2,334.3 L446.0,337.9 L446.9,341.5 L447.7,345.0 L448.5,348.6 L449.3,352.1 L450.1,355.7 L450.9,359.2 L451.6,362.7 L452.4,366.1" stroke="#1ab4f0" stroke-width="1" fill="none" stroke-dasharray="3,2"/>
<path d="M422.1,240.9 L423.7,244.9 L425.2,248.9 L426.8,252.8 L428.2,256.8 L429.7,260.7 L431.2,264.6 L432.6,268.4 L434.0,272.3 L435.4,276.1 L436.8,279.9 L438.1,283.7 L439.4,287.5 L440.7,291.2 L442.0,295.0 L443.3,298.7 L444.5,302.4 L445.7,306.0 L446.9,309.7 L448.1,313.3 L449.3,316.9 L450.4,320.5 L451.5,324.1 L452.6,327.6 L453.7,331.2 L454.7,334.7 L455.8,338.2 L456.8,341.6 L457.7,345.1 L458.7,348.5 L459.6,351.9" stroke="#1ab4f0" stroke-width="1" fill="none" stroke-dasharray="3,2"/>
<path d="M418.3,228.1 L420.1,232.1 L421.9,236.2 L423.7,240.2 L425.4,244.2 L427.1,248.1 L428.8,252.1 L430.4,256.0 L432.0,259.9 L433.6,263.8 L435.2,267.6 L436.8,271.4 L438.3,275.2 L439.8,279.0 L441.3,282.8 L442.7,286.5 L444.1,290.2 L445.5,293.9 L446.9,297.5 L448.3,301.2 L449.6,304.8 L450.9,308.4 L452.2,311.9 L453.4,315.5 L454.6,319.0 L455.8,322.5 L457.0,326.0 L458.2,329.4 L459.3,332.8 L460.4,336.2 L461.5,339.6" stroke="#1ab4f0" stroke-width="1" fill="none" stroke-dasharray="3,2"/>
<path d="M423.1,274.8 L423.6,273.7 L424.1,272.5 L424.6,271.4 L425.0,270.2 L425.4,269.0 L425.7,267.8 L426.0,266.5 L426.2,265.2 L426.4,263.9 L426.5,262.6 L426.6,261.2 L426.7,259.8 L426.7,258.4 L426.6,256.9 L426.5,255.5 L426.4,254.0 L426.2,252.4 L426.0,250.9 L425.7,249.3 L425.4,247.7 L425.1,246.1 L424.6,244.4 L424.2,242.7 L423.7,241.0 L423.2,239.3 L422.6,237.5 L421.9,235.7 L421.3,233.9 L420.5,232.1 L419.8,230.2" stroke="#1ab4f0" stroke-width="1" fill="none" stroke-dasharray="2,2"/>
<path d="M427.2,293.9 L427.9,292.8 L428.6,291.7 L429.3,290.6 L429.9,289.4 L430.4,288.2 L431.0,287.0 L431.4,285.7 L431.8,284.5 L432.2,283.2 L432.5,281.8 L432.8,280.5 L433.0,279.1 L433.2,277.7 L433.3,276.3 L433.4,274.9 L433.4,273.4 L433.4,271.9 L433.3,270.4 L433.2,268.8 L433.0,267.3 L432.8,265.7 L432.6,264.0 L432.3,262.4 L431.9,260.7 L431.5,259.0 L431.1,257.3 L430.6,255.6 L430.0,253.8 L429.4,252.0 L428.8,250.2" stroke="#1ab4f0" stroke-width="1" fill="none" stroke-dasharray="2,2"/>
<path d="M431.0,312.8 L431.9,311.7 L432.8,310.6 L433.7,309.4 L434.4,308.3 L435.2,307.1 L435.8,305.8 L436.5,304.6 L437.1,303.3 L437.6,302.0 L438.1,300.7 L438.5,299.4 L438.9,298.0 L439.2,296.6 L439.5,295.2 L439.7,293.8 L439.9,292.3 L440.0,290.9 L440.1,289.4 L440.1,287.8 L440.1,286.3 L440.0,284.7 L439.9,283.1 L439.7,281.5 L439.5,279.9 L439.2,278.2 L438.9,276.5 L438.5,274.8 L438.1,273.0 L437.6,271.3 L437.1,269.5" stroke="#1ab4f0" stroke-width="1" fill="none" stroke-dasharray="2,2"/>
<path d="M434.5,331.4 L435.6,330.3 L436.7,329.1 L437.7,328.0 L438.6,326.8 L439.5,325.6 L440.4,324.3 L441.1,323.1 L441.9,321.8 L442.6,320.5 L443.2,319.2 L443.8,317.9 L444.3,316.5 L444.8,315.1 L445.2,313.7 L445.6,312.3 L445.9,310.8 L446.1,309.4 L446.3,307.9 L446.5,306.3 L446.6,304.8 L446.7,303.2 L446.7,301.7 L446.6,300.0 L446.5,298.4 L446.4,296.8 L446.1,295.1 L445.9,293.4 L445.6,291.7 L445.2,289.9 L444.8,288.2" stroke="#1ab4f0" stroke-width="1" fill="none" stroke-dasharray="2,2"/>
<path d="M437.8,349.7 L439.0,348.5 L440.2,347.4 L441.4,346.2 L442.5,345.0 L443.5,343.7 L444.5,342.5 L445.4,341.2 L446.3,339.9 L447.1,338.6 L447.9,337.3 L448.6,335.9 L449.3,334.6 L449.9,333.2 L450.4,331.7 L450.9,330.3 L451.3,328.8 L451.7,327.4 L452.1,325.9 L452.3,324.3 L452.6,322.8 L452.7,321.2 L452.8,319.6 L452.9,318.0 L452.9,316.4 L452.8,314.8 L452.7,313.1 L452.6,311.4 L452.4,309.7 L452.1,308.0 L451.8,306.2" stroke="#1ab4f0" stroke-width="1" fill="none" stroke-dasharray="2,2"/>
<path d="M440.7,367.7 L442.1,366.5 L443.4,365.3 L444.7,364.1 L445.9,362.8 L447.1,361.6 L448.2,360.3 L449.3,359.0 L450.3,357.7 L451.3,356.3 L452.2,355.0 L453.0,353.6 L453.8,352.2 L454.5,350.7 L455.2,349.3 L455.8,347.8 L456.3,346.4 L456.8,344.9 L457.3,343.4 L457.6,341.8 L458.0,340.3 L458.2,338.7 L458.4,337.1 L458.6,335.5 L458.7,333.8 L458.7,332.2 L458.7,330.5 L458.6,328.8 L458.5,327.1 L458.3,325.4 L458.1,323.6" stroke="#1ab4f0" stroke-width="1" fill="none" stroke-dasharray="2,2"/>
<rect x="428" y="252" width="2" height="2" fill="#1ab4f0"/>
<rect x="440" y="281" width="2" height="1" fill="#1ab4f0"/>
<rect x="462" y="347" width="2" height="1" fill="#1ab4f0"/>
<rect x="425" y="243" width="2" height="2" fill="#1ab4f0"/>
<rect x="440" y="280" width="1" height="1" fill="#1ab4f0"/>
<rect x="448" y="298" width="2" height="2" fill="#1ab4f0"/>
<rect x="454" y="317" width="1" height="1" fill="#1ab4f0"/>
<rect x="455" y="322" width="2" height="1" fill="#1ab4f0"/>
<rect x="457" y="340" width="2" height="2" fill="#1ab4f0"/>
<rect x="462" y="351" width="2" height="2" fill="#1ab4f0"/>
<rect x="454" y="318" width="1" height="2" fill="#1ab4f0"/>
<rect x="425" y="250" width="1" height="2" fill="#1ab4f0"/>
<rect x="464" y="356" width="2" height="2" fill="#1ab4f0"/>
<rect x="436" y="269" width="2" height="2" fill="#1ab4f0"/>
<rect x="444" y="294" width="1" height="2" fill="#1ab4f0"/>
<rect x="450" y="303" width="2" height="2" fill="#1ab4f0"/>
<rect x="450" y="321" width="2" height="2" fill="#1ab4f0"/>
<rect x="462" y="344" width="2" height="2" fill="#1ab4f0"/>
<rect x="425" y="242" width="2" height="2" fill="#1ab4f0"/>
<rect x="432" y="274" width="2" height="2" fill="#1ab4f0"/>
<rect x="420" y="230" width="2" height="1" fill="#1ab4f0"/>
<rect x="421" y="235" width="2" height="1" fill="#1ab4f0"/>
<rect x="420" y="231" width="1" height="2" fill="#1ab4f0"/>
<rect x="453" y="323" width="2" height="2" fill="#1ab4f0"/>
<rect x="430" y="270" width="1" height="1" fill="#1ab4f0"/>
<rect x="423" y="239" width="1" height="2" fill="#1ab4f0"/>
<rect x="432" y="267" width="2" height="1" fill="#1ab4f0"/>
<rect x="465" y="361" width="2" height="1" fill="#1ab4f0"/>
<rect x="461" y="348" width="2" height="2" fill="#1ab4f0"/>
<rect x="434" y="263" width="2" height="2" fill="#1ab4f0"/>
<rect x="419" y="228" width="2" height="2" fill="#1ab4f0"/>
<rect x="437" y="272" width="1" height="2" fill="#1ab4f0"/>
<rect x="439" y="285" width="2" height="2" fill="#1ab4f0"/>
<rect x="432" y="259" width="2" height="2" fill="#1ab4f0"/>
<rect x="419" y="230" width="2" height="1" fill="#1ab4f0"/>
<rect x="420" y="232" width="2" height="2" fill="#1ab4f0"/>
<rect x="451" y="316" width="2" height="2" fill="#1ab4f0"/>
<rect x="450" y="339" width="1" height="2" fill="#1ab4f0"/>
<rect x="421" y="236" width="2" height="2" fill="#1ab4f0"/>
<rect x="431" y="258" width="1" height="2" fill="#1ab4f0"/>
<rect x="424" y="241" width="2" height="2" fill="#1ab4f0"/>
<rect x="432" y="264" width="1" height="2" fill="#1ab4f0"/>
<rect x="450" y="325" width="2" height="1" fill="#1ab4f0"/>
<rect x="450" y="315" width="2" height="1" fill="#1ab4f0"/>
<rect x="451" y="309" width="1" height="1" fill="#1ab4f0"/>
<rect x="446" y="291" width="2" height="1" fill="#1ab4f0"/>
<rect x="437" y="270" width="1" height="1" fill="#1ab4f0"/>
<rect x="433" y="262" width="2" height="2" fill="#1ab4f0"/>
<rect x="428" y="250" width="1" height="2" fill="#1ab4f0"/>
<rect x="463" y="358" width="2" height="1" fill="#1ab4f0"/>
<rect x="460" y="344" width="2" height="1" fill="#1ab4f0"/>
<rect x="457" y="335" width="1" height="2" fill="#1ab4f0"/>
<rect x="429" y="253" width="2" height="2" fill="#1ab4f0"/>
<rect x="434" y="269" width="2" height="2" fill="#1ab4f0"/>
<rect x="435" y="265" width="1" height="1" fill="#1ab4f0"/>
<rect x="416" y="221" width="2" height="2" fill="#1ab4f0"/>
<rect x="436" y="268" width="2" height="1" fill="#1ab4f0"/>
<rect x="421" y="234" width="2" height="2" fill="#1ab4f0"/>
<rect x="443" y="295" width="2" height="1" fill="#1ab4f0"/>
<rect x="460" y="331" width="2" height="1" fill="#1ab4f0"/>
<rect x="454" y="348" width="2" height="2" fill="#1ab4f0"/>
<rect x="463" y="339" width="2" height="2" fill="#1ab4f0"/>
<rect x="421" y="235" width="1" height="1" fill="#1ab4f0"/>
<rect x="443" y="295" width="1" height="2" fill="#1ab4f0"/>
<rect x="443" y="308" width="2" height="1" fill="#1ab4f0"/>
<rect x="435" y="273" width="2" height="2" fill="#1ab4f0"/>
<rect x="454" y="347" width="1" height="1" fill="#1ab4f0"/>
<rect x="420" y="232" width="1" height="1" fill="#1ab4f0"/>
<rect x="430" y="260" width="1" height="1" fill="#1ab4f0"/>
<rect x="441" y="283" width="2" height="1" fill="#1ab4f0"/>
<rect x="454" y="331" width="2" height="2" fill="#1ab4f0"/>
<rect x="442" y="306" width="2" height="1" fill="#1ab4f0"/>
<rect x="460" y="332" width="1" height="1" fill="#1ab4f0"/>
<rect x="421" y="235" width="1" height="2" fill="#1ab4f0"/>
<rect x="422" y="237" width="2" height="1" fill="#1ab4f0"/>
<rect x="433" y="267" width="2" height="2" fill="#1ab4f0"/>
<rect x="447" y="303" width="1" height="2" fill="#1ab4f0"/>
<rect x="439" y="289" width="1" height="2" fill="#1ab4f0"/>
<rect x="453" y="312" width="2" height="1" fill="#1ab4f0"/>
<rect x="421" y="235" width="2" height="2" fill="#1ab4f0"/>
<rect x="434" y="264" width="2" height="2" fill="#1ab4f0"/>
<rect x="420" y="231" width="2" height="2" fill="#1ab4f0"/>
<rect x="437" y="272" width="2" height="1" fill="#1ab4f0"/>
<rect x="429" y="253" width="2" height="2" fill="#1ab4f0"/>
<rect x="422" y="238" width="2" height="1" fill="#1ab4f0"/>
<rect x="461" y="332" width="2" height="2" fill="#1ab4f0"/>
<rect x="456" y="335" width="2" height="2" fill="#1ab4f0"/>
<rect x="421" y="233" width="2" height="2" fill="#1ab4f0"/>
<rect x="457" y="325" width="2" height="2" fill="#1ab4f0"/>
<rect x="445" y="309" width="2" height="2" fill="#1ab4f0"/>
<rect x="423" y="244" width="2" height="1" fill="#1ab4f0"/>
<rect x="443" y="289" width="2" height="2" fill="#1ab4f0"/>
<rect x="428" y="265" width="1" height="1" fill="#1ab4f0"/>
<rect x="459" y="332" width="2" height="2" fill="#1ab4f0"/>
<rect x="445" y="291" width="1" height="2" fill="#1ab4f0"/>
<rect x="442" y="283" width="1" height="2" fill="#1ab4f0"/>
<rect x="454" y="313" width="1" height="2" fill="#1ab4f0"/>
<rect x="433" y="262" width="1" height="1" fill="#1ab4f0"/>
<rect x="466" y="356" width="2" height="2" fill="#1ab4f0"/>
<rect x="451" y="306" width="2" height="2" fill="#1ab4f0"/>
<rect x="446" y="291" width="2" height="2" fill="#1ab4f0"/>
<rect x="464" y="358" width="1" height="2" fill="#1ab4f0"/>
<rect x="459" y="326" width="2" height="2" fill="#1ab4f0"/>
<rect x="445" y="295" width="2" height="2" fill="#1ab4f0"/>
<rect x="441" y="281" width="1" height="1" fill="#1ab4f0"/>
<rect x="420" y="232" width="2" height="2" fill="#1ab4f0"/>
<rect x="464" y="350" width="1" height="1" fill="#1ab4f0"/>
<rect x="432" y="266" width="2" height="2" fill="#1ab4f0"/>
<rect x="434" y="270" width="2" height="2" fill="#1ab4f0"/>
<rect x="463" y="358" width="2" height="2" fill="#1ab4f0"/>
<rect x="447" y="298" width="2" height="1" fill="#1ab4f0"/>
<rect x="433" y="268" width="2" height="1" fill="#1ab4f0"/>
<rect x="427" y="250" width="2" height="2" fill="#1ab4f0"/>
<rect x="454" y="337" width="2" height="2" fill="#1ab4f0"/>
<rect x="452" y="324" width="2" height="2" fill="#1ab4f0"/>
<rect x="445" y="295" width="2" height="1" fill="#1ab4f0"/>
<rect x="460" y="341" width="2" height="1" fill="#1ab4f0"/>
<rect x="441" y="290" width="1" height="2" fill="#1ab4f0"/>
<rect x="453" y="314" width="1" height="2" fill="#1ab4f0"/>
<rect x="431" y="263" width="2" height="1" fill="#1ab4f0"/>
<rect x="425" y="242" width="1" height="2" fill="#1ab4f0"/>
<rect x="428" y="263" width="1" height="2" fill="#1ab4f0"/>
<rect x="420" y="231" width="1" height="1" fill="#1ab4f0"/>
<rect x="427" y="247" width="1" height="2" fill="#1ab4f0"/>
<rect x="439" y="275" width="2" height="1" fill="#1ab4f0"/>
<rect x="422" y="238" width="2" height="2" fill="#1ab4f0"/>
<rect x="421" y="233" width="2" height="2" fill="#1ab4f0"/>
<rect x="436" y="271" width="1" height="2" fill="#1ab4f0"/>
<rect x="422" y="238" width="2" height="2" fill="#1ab4f0"/>
<rect x="459" y="360" width="2" height="2" fill="#1ab4f0"/>
<rect x="451" y="316" width="2" height="2" fill="#1ab4f0"/>
<rect x="450" y="306" width="2" height="1" fill="#1ab4f0"/>
<rect x="454" y="313" width="2" height="2" fill="#1ab4f0"/>
<rect x="443" y="304" width="2" height="2" fill="#1ab4f0"/>
<rect x="433" y="262" width="2" height="2" fill="#1ab4f0"/>
<rect x="445" y="306" width="2" height="2" fill="#1ab4f0"/>
<rect x="448" y="315" width="2" height="2" fill="#1ab4f0"/>
<rect x="420" y="231" width="1" height="2" fill="#1ab4f0"/>
<rect x="449" y="304" width="2" height="2" fill="#1ab4f0"/>
<rect x="433" y="270" width="2" height="2" fill="#1ab4f0"/>
<rect x="456" y="323" width="1" height="2" fill="#1ab4f0"/>
<rect x="426" y="245" width="2" height="2" fill="#1ab4f0"/>
<rect x="437" y="286" width="2" height="2" fill="#1ab4f0"/>
<rect x="424" y="247" width="2" height="2" fill="#1ab4f0"/>
<rect x="429" y="252" width="2" height="2" fill="#1ab4f0"/>
<rect x="460" y="331" width="2" height="2" fill="#1ab4f0"/>
<rect x="454" y="346" width="2" height="1" fill="#1ab4f0"/>
<rect x="424" y="241" width="2" height="1" fill="#1ab4f0"/>
<rect x="444" y="287" width="1" height="1" fill="#1ab4f0"/>
<rect x="452" y="313" width="2" height="2" fill="#1ab4f0"/>
<rect x="434" y="262" width="1" height="2" fill="#1ab4f0"/>
<rect x="447" y="294" width="1" height="2" fill="#1ab4f0"/>
<rect x="443" y="289" width="1" height="2" fill="#1ab4f0"/>
<rect x="436" y="275" width="2" height="2" fill="#1ab4f0"/>
<rect x="464" y="355" width="2" height="2" fill="#1ab4f0"/>
<rect x="432" y="262" width="2" height="2" fill="#1ab4f0"/>
<rect x="452" y="308" width="2" height="2" fill="#1ab4f0"/>
<rect x="423" y="243" width="2" height="1" fill="#1ab4f0"/>
<rect x="421" y="233" width="1" height="2" fill="#1ab4f0"/>
<rect x="425" y="243" width="1" height="1" fill="#1ab4f0"/>
<rect x="455" y="336" width="2" height="2" fill="#1ab4f0"/>
<rect x="461" y="365" width="2" height="2" fill="#1ab4f0"/>
<rect x="459" y="355" width="1" height="2" fill="#1ab4f0"/>
<rect x="457" y="367" width="2" height="1" fill="#1ab4f0"/>
<rect x="442" y="288" width="1" height="2" fill="#1ab4f0"/>
<rect x="431" y="255" width="2" height="2" fill="#1ab4f0"/>
<rect x="421" y="234" width="2" height="1" fill="#1ab4f0"/>
<rect x="453" y="312" width="2" height="1" fill="#1ab4f0"/>
<rect x="463" y="341" width="2" height="2" fill="#1ab4f0"/>
<rect x="455" y="324" width="1" height="1" fill="#1ab4f0"/>
</svg>
<!-- project browser -->
<div id="pb" class="a"></div>
<div class="a" style="left:751px;top:84px;width:12px;height:451px;background:linear-gradient(90deg,#fafafa,#ececec)"></div>
<svg class="a" style="left:751px;top:86px" width="12" height="8"><path d="M3,5 l2.5,-2.5 l2.5,2.5" fill="none" stroke="#333" stroke-width="1"/></svg>
<svg class="a" style="left:751px;top:518px" width="12" height="8"><path d="M4,3 h4 l-2,2z" fill="#555"/></svg>
<div class="a" style="left:762px;top:84px;width:2px;height:451px;background:#e4e4e4"></div><div class="a" style="left:752px;top:302px;width:8px;height:8px;background:linear-gradient(90deg,#f4f4f4 50%,#c8c8c8);border-right:1px solid #999;border-bottom:1px solid #999"></div>
<div class="a" style="left:764px;top:84px;width:249px;height:10px;background:#c4d0dd"></div>
<div class="t" style="font-weight:bold;left:767px;top:85px;color:#3a4050">项目浏览器 - 族1</div>
<svg class="a" style="left:1005px;top:85px" width="8" height="9"><path d="M2,2 l4,4 M6,2 l-4,4" stroke="#111" stroke-width="1.2"/></svg>
<div class="a" style="left:764px;top:95px;width:249px;height:440px;border-left:1.5px solid #444;border-top:1.5px solid #444;background:#fff"></div>
<div class="a" style="left:785px;top:96px;width:35px;height:10px;background:#e4e4e4"></div>
<div class="t" style="font-weight:bold;left:786px;top:96px;color:#111">视图 (全部)</div>
<div class="t" style="font-weight:bold;left:789px;top:107px;color:#111">楼层平面</div>
<div class="t" style="font-weight:bold;left:789px;top:117px;color:#111">三维视图</div>
<div class="t" style="font-weight:bold;left:789px;top:128px;color:#111">立面 (立面 1)</div>
<div class="t" style="font-weight:bold;left:786px;top:138px;color:#111">图纸 (全部)</div>
<div class="t" style="font-weight:bold;left:786px;top:149px;color:#111">族</div>
<svg class="a" style="left:764px;top:95px" width="30" height="65">
<g fill="none" stroke="#333" stroke-width="1">
<path d="M3,5.5 h4 M3,8.5 h4 M8.5,7 h2" stroke="#777"/>
<path d="M12,3.5 h1 M15,3.5 h1 M12,10.5 h1 M15,10.5 h1 M11.5,5 v1 M11.5,8 v1 M16.5,5 v1 M16.5,8 v1" stroke="#222"/><rect x="13" y="5.5" width="3" height="3.5" stroke="#555"/>
<path d="M14,12 v3" stroke="#aaa"/>
<path d="M11.5,15 v4 h1 M13.5,17 h1" stroke="#556"/>
<path d="M14,20 v3" stroke="#999"/><path d="M11.5,25 v4 M12.5,27 l2,-1 M12.5,27 l2,1" stroke="#3a5aa0"/>
<path d="M11.5,35 v4 M12.5,37 h2" stroke="#556"/>
<path d="M9.5,45 v6 h9 v-5 h-3 v-2 h-2 v1z" stroke="#222" fill="#9aa0a8" stroke-width="1.1"/>
<path d="M3,57.5 h4 M3,60.5 h4 M8.5,59 h2" stroke="#777"/>
<path d="M11,56 h7 M11,59 h7 M11,62 h7" stroke="#333"/><path d="M14,56 v6" stroke="#aaa"/>
</g></svg>
<!-- view control bar -->
<div class="a" style="left:121px;top:526px;width:630px;height:9px;background:linear-gradient(#fbfbfb,#eeeeee);border-top:1px solid #d0d0d0"></div>
<div class="t" style="left:145px;top:526px;font-size:6px;color:#000;line-height:9px;font-weight:bold">1:1</div>
<svg class="a" style="left:120px;top:526px" width="190" height="9">
<g fill="none" stroke="#333" stroke-width="1">
<rect x="43.5" y="1.5" width="7" height="6" stroke="#222"/><path d="M44,2.5 l3,2.5 l3,-2.5" stroke="#222"/>
<path d="M55.5,8 v-5 h7 v5 M57.5,5 h5" stroke="#1a5ad0" stroke-width="1.4"/>
<circle cx="69" cy="4.5" r="2.5" stroke="#e0a020" fill="#f8d040"/><path d="M66,1.5 l1,1 M72,1.5 l-1,1 M72,7 l2,1.5" stroke="#d04020"/>
<circle cx="80" cy="3.5" r="2" stroke="#1a5ad0" stroke-width="1.3"/><path d="M77,7 h5" stroke="#1a5ad0" stroke-width="1.3"/><path d="M84,6 h2" stroke="#c02020"/><rect x="86" y="4" width="3" height="4" fill="#c02020" stroke="none"/>
<rect x="100" y="2" width="3" height="6" fill="#1a5ad0" stroke="none"/><rect x="103" y="4" width="3" height="4" fill="#c02020" stroke="none"/>
<path d="M110,7 v-4 h3 v4 M113,5 l2,-2 M113,6 l3,2" stroke="#1a3a80" stroke-width="1.2"/><path d="M115,3 l1,4" stroke="#2a8a5a"/>
<circle cx="126" cy="4.5" r="3" stroke="#222"/><path d="M124,3 l3,3" stroke="#1a5ad0"/>
<path d="M135,3 l2,1.5 l-2,1.5" stroke="#aaa"/>
<rect x="143.5" y="2.5" width="5" height="5" stroke="#aaa" stroke-dasharray="1,1"/>
<rect x="154.5" y="1.5" width="6" height="6" stroke="#aaa"/>
<circle cx="170" cy="4.5" r="3" stroke="#aaa"/>
<path d="M182,2.5 l-3,2 l3,2z" fill="#444" stroke="none"/>
</g></svg>
<div class="a" style="left:520px;top:527px;width:7px;height:8px;background:linear-gradient(90deg,#e8e8e8,#c8c8c8);border:1px solid #bbb"></div>
<svg class="a" style="left:743px;top:527px" width="8" height="8"><path d="M2,1 l3,2.5 l-3,2.5z" fill="#666"/></svg>
<!-- status bar -->
<div id="status" class="a"></div>
<div class="a" style="left:0;top:535px;width:1013px;height:1px;background:#b8b8b8"></div>
<div class="t" style="left:-1px;top:538px;color:#0a0a20;font-size:6px;letter-spacing:0.25px;font-weight:bold">单击可进行选择; 按 Tab 键并单击可选择其他项目; 按 Ctrl 键并单击可将新项目添加到选择集; 按 Shift 键并单击可取消选择。</div>
<div class="a" style="left:544px;top:536px;width:1px;height:11px;background:#c4c4c4"></div>
<div class="a" style="left:897px;top:536px;width:50px;height:11px;background:#e4e4e4"></div>
<svg class="a" style="left:897px;top:536px" width="116" height="11">
<g fill="none" stroke="#333" stroke-width="1">
<rect x="3" y="3" width="5" height="6" fill="#f0c030" stroke="#a07010"/><path d="M6,2 v3" stroke="#1a5ad0"/>
<path d="M14,8 h7 M15,8 l2,-5 h3 l1,5" stroke="#1a5ad0"/>
<rect x="27" y="3" width="4" height="5" fill="#e06020" stroke="#a02010"/><path d="M26,6 h7" stroke="#333"/>
<path d="M39,2 v8 M37,5 h5" stroke="#1a5ad0"/>
</g></svg>
<div class="a" style="left:955px;top:525.5px;width:62px;height:21px;background:linear-gradient(#fdfdfd,#e8e8e8);border-radius:10px;border:1px solid #cfcfcf"></div>
<div class="a" style="left:948px;top:522.5px;width:26px;height:26px;border-radius:50%;background:linear-gradient(#2a8a50,#1a7040 72%,#4cbc5e 72%,#44b058);border:1.5px solid #f0f0f0;box-shadow:0 0 1.5px #666"></div>
<div class="t" style="left:953px;top:531px;color:#fff;font-size:7px;letter-spacing:0.3px">31%</div>
<svg class="a" style="left:974px;top:527px" width="39" height="20">
<path d="M2,3.5 h4 M4,3.5 v3" stroke="#d03030" stroke-width="1.2"/><path d="M4,9.5 v4 M2.5,12 l1.5,1.5 l1.5,-1.5" stroke="#30a040" stroke-width="1.1" fill="none"/>
<path d="M19,4 l2,1.5 l-2,1.5 M22,4 l2,1.5 l-2,1.5 M25,3 l1.5,3" stroke="#222" fill="none" stroke-width="1"/><path d="M19,11 l2,1.5 l-2,1.5 M22,11 l2,1.5 l-2,1.5 M25,10 l1.5,3" stroke="#222" fill="none" stroke-width="1"/>
<circle cx="33.5" cy="9" r="4.8" fill="#3a7ad8"/><path d="M33.5,6.5 v5 M31,9 h5" stroke="#fff" stroke-width="1.3"/>
</svg>
<div id="task" class="a"></div>

</body></html>
